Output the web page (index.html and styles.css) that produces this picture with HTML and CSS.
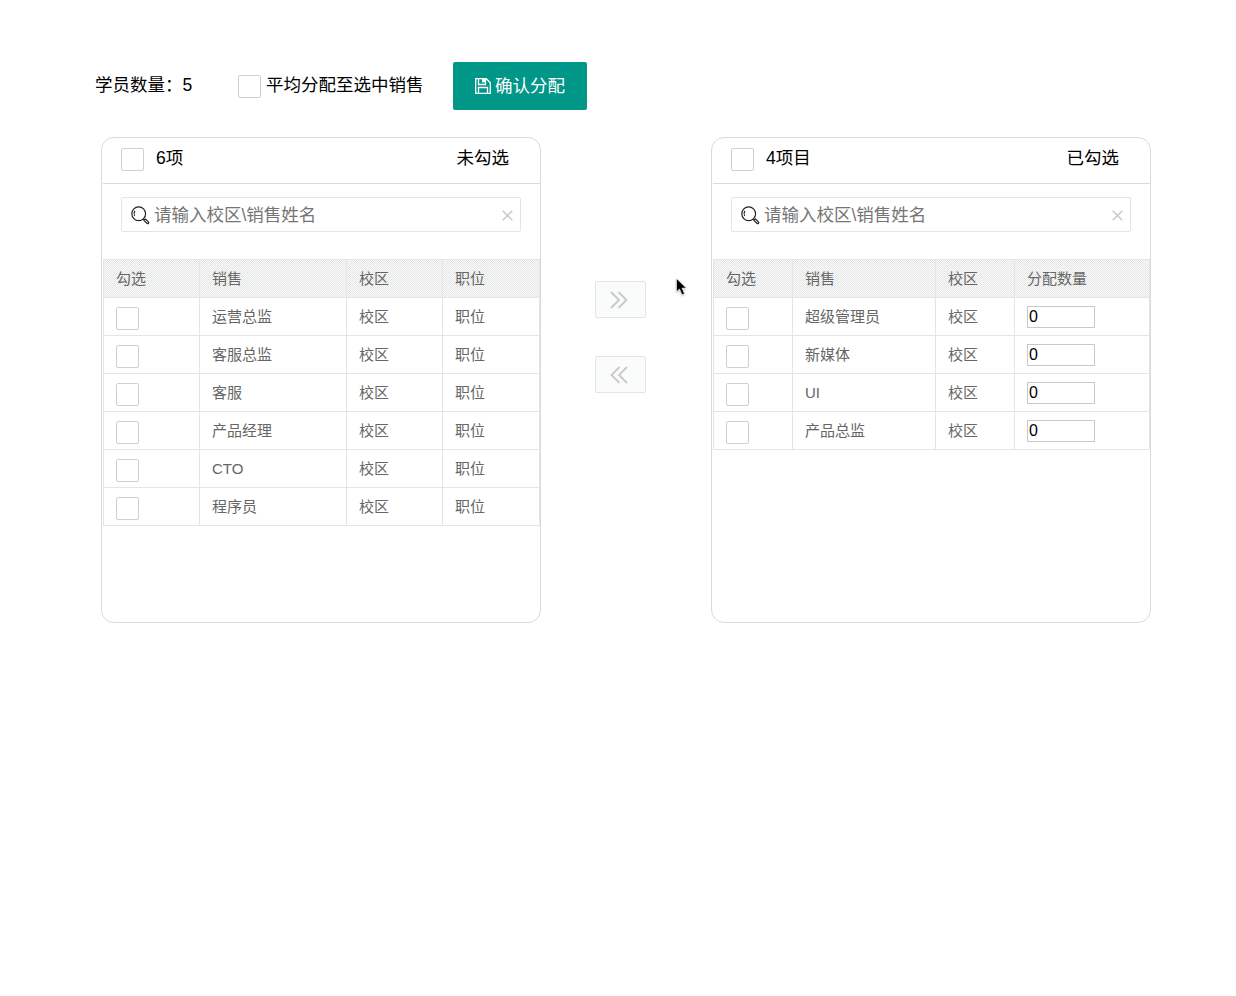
FILE: index.html
```html
<!DOCTYPE html>
<html lang="zh-CN">
<head>
<meta charset="utf-8">
<title>学员分配</title>
<link rel="stylesheet" href="styles.css">
</head>
<body>
<svg class="defs" width="0" height="0">
  <symbol id="search" viewBox="0 0 19 19"><circle cx="7.7" cy="7.7" r="6.9"/><path d="M3.7 10A5 5 0 0 1 3.9 4.8M12.2 13l1.2 1M13 14.6l1.6-1.5 3 3c.7.8-.7 2.1-1.4 1.4z"/></symbol>
  <symbol id="close" viewBox="0 0 11 11"><path d="M.7.7l9.6 9.6M10.3.7L.7 10.3"/></symbol>
</svg>
<header class="toolbar">
  <span class="count">学员数量：5</span>
  <label class="average"><i class="check"></i><span>平均分配至选中销售</span></label>
  <button class="confirm"><svg width="16" height="16" viewBox="0 0 16 16"><path d="M.7.7h10.6l4 4v10.6H.7zM3.5.7v5.8h7V.7M3.5 15V9.5h9V15"/><path class="solid" d="M7 1h3v3.4H7z"/></svg><span>确认分配</span></button>
</header>
<main class="transfer">
  <section class="panel">
    <div class="panel-head"><i class="check"></i><span>6项</span><span class="state">未勾选</span></div>
    <div class="search"><svg class="glass"><use href="#search"/></svg><span>请输入校区\销售姓名</span><svg class="clear"><use href="#close"/></svg></div>
    <table class="list">
      <colgroup><col class="w97"><col class="w147"><col class="w96"><col class="w97"></colgroup>
      <tr><th>勾选</th><th>销售</th><th>校区</th><th>职位</th></tr>
      <tr><td><i class="check"></i></td><td>运营总监</td><td>校区</td><td>职位</td></tr>
      <tr><td><i class="check"></i></td><td>客服总监</td><td>校区</td><td>职位</td></tr>
      <tr><td><i class="check"></i></td><td>客服</td><td>校区</td><td>职位</td></tr>
      <tr><td><i class="check"></i></td><td>产品经理</td><td>校区</td><td>职位</td></tr>
      <tr><td><i class="check"></i></td><td>CTO</td><td>校区</td><td>职位</td></tr>
      <tr><td><i class="check"></i></td><td>程序员</td><td>校区</td><td>职位</td></tr>
    </table>
  </section>
  <div class="moves">
    <button class="move"><svg width="18" height="18" viewBox="0 0 18 18"><path d="M1 1l8 8-8 8M8.5 1l8 8-8 8"/></svg></button>
    <button class="move"><svg width="18" height="18" viewBox="0 0 18 18"><path d="M9.5 1l-8 8 8 8M17 1L9 9l8 8"/></svg></button>
  </div>
  <section class="panel">
    <div class="panel-head"><i class="check"></i><span>4项目</span><span class="state">已勾选</span></div>
    <div class="search"><svg class="glass"><use href="#search"/></svg><span>请输入校区\销售姓名</span><svg class="clear"><use href="#close"/></svg></div>
    <table class="list">
      <colgroup><col class="w80"><col class="w143"><col class="w79"><col class="w135"></colgroup>
      <tr><th>勾选</th><th>销售</th><th>校区</th><th>分配数量</th></tr>
      <tr><td><i class="check"></i></td><td>超级管理员</td><td>校区</td><td><input class="amount" value="0"></td></tr>
      <tr><td><i class="check"></i></td><td>新媒体</td><td>校区</td><td><input class="amount" value="0"></td></tr>
      <tr><td><i class="check"></i></td><td>UI</td><td>校区</td><td><input class="amount" value="0"></td></tr>
      <tr><td><i class="check"></i></td><td>产品总监</td><td>校区</td><td><input class="amount" value="0"></td></tr>
    </table>
  </section>
</main>
<svg class="pointer" width="12" height="18" viewBox="0 0 12 18"><path d="M.5.5v13.2l3-2.7 2.5 5.8 2.5-1.1-2.5-5.6h4.3z"/></svg>
</body>
</html>
```
FILE: styles.css
```css
* { box-sizing: border-box; }
body {
  margin: 0;
  padding: 62px 0 0 95px;
  background: #fff;
  color: #000;
  font: 17.5px/24px "Liberation Sans", "Noto Sans CJK SC", sans-serif;
}
svg { display: block; flex: none; fill: none; }
button { font: inherit; padding: 0; }
.defs { position: absolute; }
.toolbar { display: flex; height: 48px; white-space: nowrap; }
.count { width: 143px; padding-top: 11px; }
.average { display: flex; width: 215px; gap: 5px; }
.average .check { margin-top: 13px; }
.average span { padding-top: 11px; }
.check {
  display: block;
  flex: none;
  width: 23px;
  height: 23px;
  border: 1px solid #cfcfcf;
  border-radius: 2px;
  background: #fff;
}
.confirm {
  display: flex;
  align-items: center;
  justify-content: center;
  gap: 4px;
  width: 134px;
  height: 48px;
  border: 0;
  border-radius: 2px;
  background: #009688;
  color: #fff;
}
.confirm svg { stroke: #fff; stroke-width: 1.3; }
.solid { fill: #fff; stroke: none; }
.transfer { display: flex; align-items: flex-start; margin: 27px 0 0 6px; }
.panel {
  width: 440px;
  height: 486px;
  border: 1px solid #d9dbda;
  border-radius: 13px;
}
.panel-head {
  display: flex;
  height: 46px;
  margin-left: 1px;
  padding: 8px 31px 0 18px;
  border-bottom: 1px solid #d9dbda;
}
.panel-head .check { margin: 2px 12px 0 0; }
.state { margin-left: auto; }
.search {
  display: flex;
  align-items: center;
  width: 400px;
  height: 35px;
  margin: 13px 0 27px 19px;
  padding: 0 7px 0 9px;
  border: 1px solid #e3e6e5;
  border-radius: 2px;
  color: #757575;
}
.glass { width: 19px; height: 19px; margin: 1px 4px 0 0; stroke: #222; stroke-width: 1.2; }
.clear { width: 11px; height: 11px; margin: 2px 0 0 auto; stroke: #c2c7c5; stroke-width: 1.3; }
.list {
  width: 437px;
  margin-left: 1px;
  table-layout: fixed;
  border-collapse: separate;
  border-spacing: 0;
  color: #666;
  font-size: 15px;
  line-height: 24px;
}
.w97 { width: 97px; }
.w147 { width: 147px; }
.w96 { width: 96px; }
.w80 { width: 80px; }
.w143 { width: 143px; }
.w79 { width: 79px; }
.w135 { width: 135px; }
.list th, .list td {
  height: 38px;
  padding: 0 12px;
  border: solid #e4e6e5;
  border-width: 0 1px 1px 0;
  text-align: left;
  font-weight: 400;
  vertical-align: middle;
}
.list th {
  height: 39px;
  border-top-width: 1px;
  background: repeating-conic-gradient(#e3e5e4 0 25%, #fcfcfc 0 50%) 0 0 / 2px 2px;
}
.list tr > :first-child { border-left-width: 1px; }
.list .check { margin-top: 3px; }
.amount {
  display: block;
  width: 68px;
  height: 22px;
  padding: 1px 2px 0 1px;
  border: 1px solid #c8c8c8;
  border-radius: 0;
  color: #000;
  font: 16px "Liberation Sans", sans-serif;
}
.moves { display: grid; gap: 38px; width: 170px; padding: 144px 0 0 54px; }
.move {
  display: flex;
  align-items: center;
  width: 51px;
  height: 37px;
  padding: 1px 0 0 14px;
  border: 1px solid #e3e6e5;
  border-radius: 2px;
  background: #fafcfb;
}
.move svg { stroke: #c9c9c9; stroke-width: 1.8; }
.pointer { position: absolute; left: 676px; top: 278px; fill: #000; stroke: #fff; stroke-width: .6; filter: drop-shadow(0 1px 1px #0004); }
```
